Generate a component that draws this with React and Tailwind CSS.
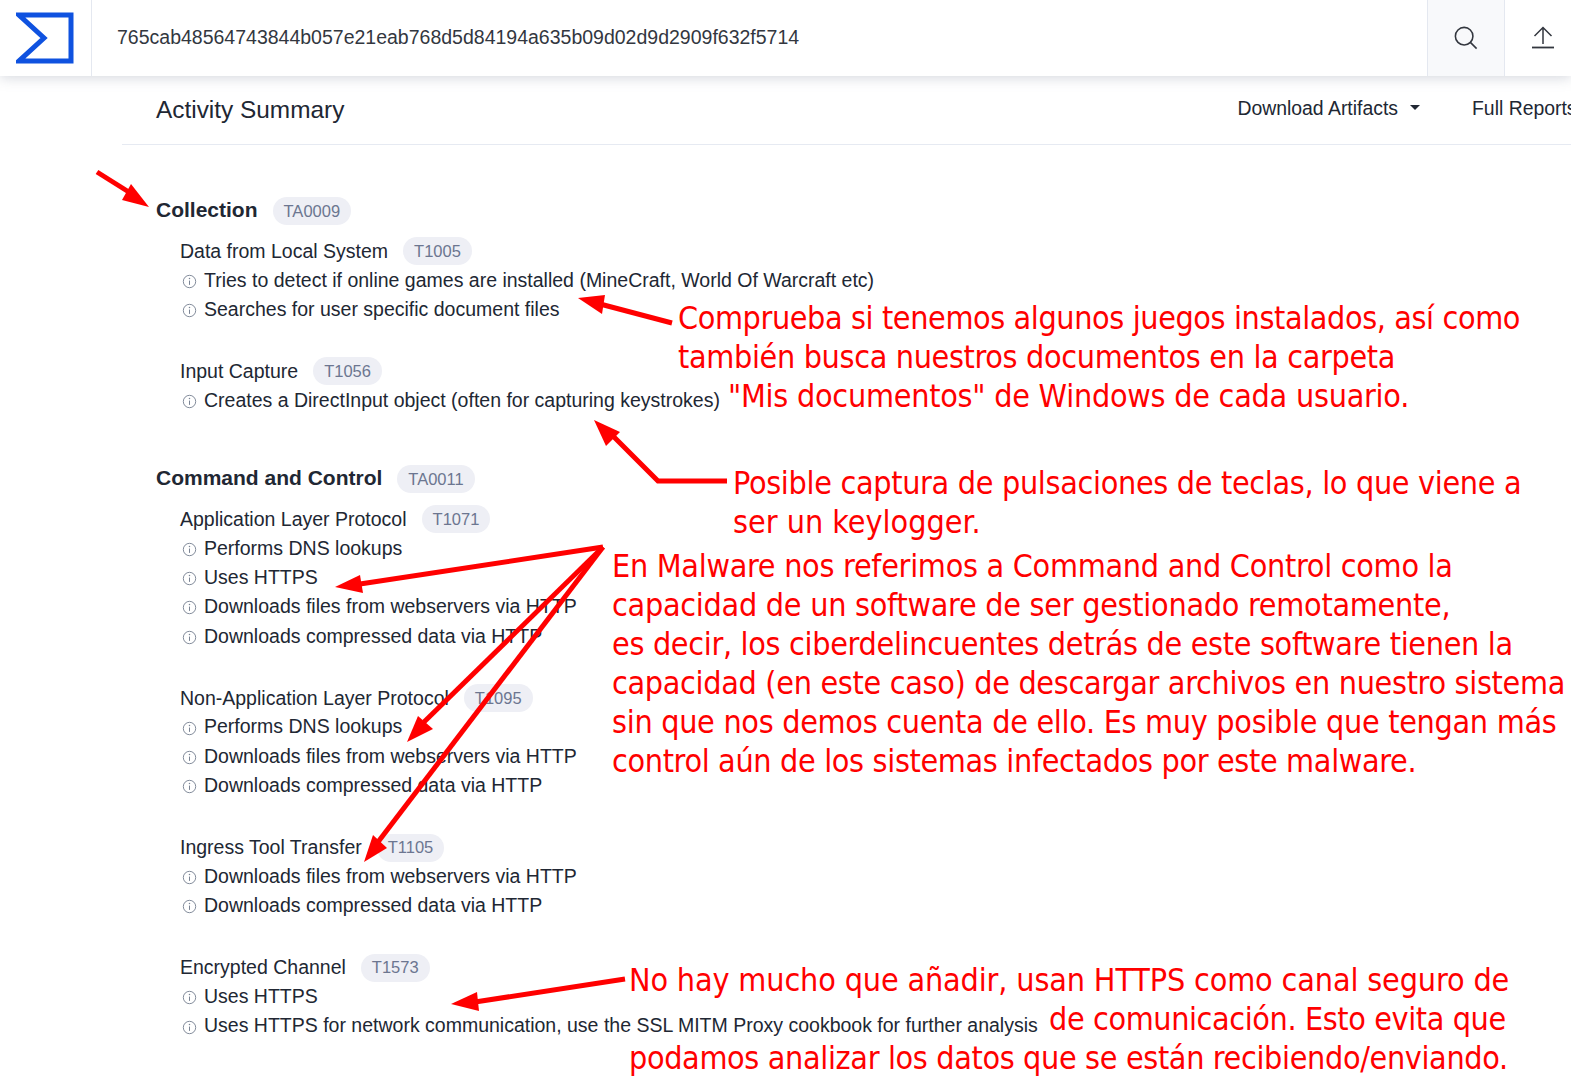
import React from "react";

const sans = "font-['Liberation_Sans',Arial,sans-serif]";

function Info() {
  return (
    <svg width="15" height="15" viewBox="0 0 16 16" fill="none" className="shrink-0 mt-[2px]">
      <circle cx="8" cy="8" r="6.6" stroke="#7b8494" strokeWidth="1" />
      <path d="M8 7v4.6" stroke="#7b8494" strokeWidth="1.1" />
      <circle cx="8" cy="4.8" r="0.8" fill="#7b8494" />
    </svg>
  );
}

function Badge({ children, className = "" }) {
  return (
    <span className={`ml-[15px] inline-flex h-[28px] items-center rounded-full bg-[#eeeff5] px-[11px] text-[16.5px] font-normal text-[#6c7690] ${className}`}>
      {children}
    </span>
  );
}

function Technique({ name, id, items, className = "" }) {
  return (
    <div className={`ml-6 ${className}`}>
      <div className="flex h-[28.6px] items-center text-[19.5px] text-[#212733]">
        <span>{name}</span>
        <Badge>{id}</Badge>
      </div>
      {items.map((t, i) => (
        <div key={i} className="flex h-[29.3px] items-center gap-[7px] pl-[1px] text-[19.5px] text-[#212733]">
          <span className="flex w-[16px] justify-center"><Info /></span>
          <span className="whitespace-nowrap">{t}</span>
        </div>
      ))}
    </div>
  );
}

function Tactic({ name, id, className = "", children }) {
  return (
    <div className={className}>
      <div className="flex h-[28px] items-center text-[21px] font-bold text-[#212733]">
        <span>{name}</span>
        <Badge className="mt-[2px]">{id}</Badge>
      </div>
      {children}
    </div>
  );
}

const dl = "Downloads files from webservers via HTTP";
const dc = "Downloads compressed data via HTTP";

const notes = [
  { x: 678, y: 299, c: "tracking-[-0.39px]", t: "Comprueba si tenemos algunos juegos instalados, así como" },
  { x: 678, y: 338, c: "tracking-[-0.34px]", t: "también busca nuestros documentos en la carpeta" },
  { x: 728, y: 377, c: "tracking-[-0.25px]", t: "\"Mis documentos\" de Windows de cada usuario." },
  { x: 733, y: 464, c: "tracking-[-0.32px]", t: "Posible captura de pulsaciones de teclas, lo que viene a" },
  { x: 733, y: 503, c: "tracking-[0px]", t: "ser un keylogger." },
  { x: 612, y: 547, c: "tracking-[-0.28px]", t: "En Malware nos referimos a Command and Control como la" },
  { x: 612, y: 586, c: "tracking-[-0.27px]", t: "capacidad de un software de ser gestionado remotamente," },
  { x: 612, y: 625, c: "tracking-[-0.32px]", t: "es decir, los ciberdelincuentes detrás de este software tienen la" },
  { x: 612, y: 664, c: "tracking-[-0.32px]", t: "capacidad (en este caso) de descargar archivos en nuestro sistema" },
  { x: 612, y: 703, c: "tracking-[-0.3px]", t: "sin que nos demos cuenta de ello. Es muy posible que tengan más" },
  { x: 612, y: 742, c: "tracking-[-0.34px]", t: "control aún de los sistemas infectados por este malware." },
  { x: 629, y: 961, c: "tracking-[-0.14px]", t: "No hay mucho que añadir, usan HTTPS como canal seguro de" },
  { x: 1049, y: 1000, c: "tracking-[-0.39px]", t: "de comunicación. Esto evita que" },
  { x: 629, y: 1039, c: "tracking-[-0.35px]", t: "podamos analizar los datos que se están recibiendo/enviando." },
];

function Arrow({ pts, tip }) {
  return (
    <g>
      <polyline points={pts} fill="none" stroke="#ff0000" strokeWidth="5" strokeLinejoin="miter" />
      <polygon points={tip} fill="#ff0000" />
    </g>
  );
}

export default function App() {
  return (
    <div className={`relative h-[1080px] w-[1571px] overflow-hidden bg-white ${sans}`}>
      <header className="relative z-10 flex h-[76px] items-stretch bg-white shadow-[0_2px_12px_rgba(120,130,150,0.3)]">
        <div className="flex w-[92px] items-center justify-center border-r border-[#e4e8f0]">
          <svg width="58" height="52" viewBox="0 0 58 52" className="mr-[2px]">
            <path d="M3 3 H55 V49 H3 L28 26 Z" fill="none" stroke="#0f52e0" strokeWidth="5" />
          </svg>
        </div>
        <div className="flex flex-1 items-center pl-[25px] text-[19.5px] text-[#33373f]">
          765cab48564743844b057e21eab768d5d84194a635b09d02d9d2909f632f5714
        </div>
        <div className="flex w-[78px] items-center justify-center border-x border-[#e4e8f0] bg-[#f8f9fb]">
          <svg width="24" height="24" viewBox="0 0 26 26" fill="none" stroke="#33373f" strokeWidth="1.7">
            <circle cx="11" cy="11" r="9.5" />
            <path d="M17.5 17.5 L24.5 24.5" />
          </svg>
        </div>
        <div className="flex w-[66px] items-center justify-center pl-[9px]">
          <svg width="24" height="24" viewBox="0 0 24 24" fill="none" stroke="#33373f" strokeWidth="1.5">
            <path d="M12 18 V2 M3.5 10 L12 1.5 L20.5 10" />
            <path d="M1 21.5 H23" strokeWidth="1.8" />
          </svg>
        </div>
      </header>

      <main className="ml-[122px]">
        <div className="flex h-[69px] items-center border-b border-[#e6eaf2] pl-[34px] text-[#212733]">
          <h1 className="text-[24.4px] font-normal">Activity Summary</h1>
          <div className="ml-auto flex items-center whitespace-nowrap pb-[2px] text-[19.4px]">
            <span>Download Artifacts</span>
            <span className="ml-[12px] mb-[2px] h-0 w-0 border-x-[5.5px] border-t-[5.5px] border-x-transparent border-t-[#212733]" />
            <span className="ml-[52px] w-[99px]">Full Reports</span>
          </div>
        </div>

        <div className="pl-[34px] pt-[51px]">
          <Tactic name="Collection" id="TA0009">
            <Technique className="mt-[13px]" name="Data from Local System" id="T1005" items={["Tries to detect if online games are installed (MineCraft, World Of Warcraft etc)", "Searches for user specific document files"]} />
            <Technique className="mt-[33px]" name="Input Capture" id="T1056" items={["Creates a DirectInput object (often for capturing keystrokes)"]} />
          </Tactic>
          <Tactic className="mt-[49px]" name="Command and Control" id="TA0011">
            <Technique className="mt-[13px]" name="Application Layer Protocol" id="T1071" items={["Performs DNS lookups", "Uses HTTPS", dl, dc]} />
            <Technique className="mt-[33px]" name="Non-Application Layer Protocol" id="T1095" items={["Performs DNS lookups", dl, dc]} />
            <Technique className="mt-[33px]" name="Ingress Tool Transfer" id="T1105" items={[dl, dc]} />
            <Technique className="mt-[33px]" name="Encrypted Channel" id="T1573" items={["Uses HTTPS", "Uses HTTPS for network communication, use the SSL MITM Proxy cookbook for further analysis"]} />
          </Tactic>
        </div>
      </main>

      <svg className="absolute left-0 top-0 z-20" width="1571" height="1080" viewBox="0 0 1571 1080">
        <Arrow pts="97,172 132,194" tip="149,207 122,200 131,184" />
        <Arrow pts="672,323 600,304" tip="578,298 605,295 602,314" />
        <Arrow pts="727,481 658,481 610,433" tip="594,420 620,432 606,446" />
        <Arrow pts="603,547 360,584" tip="335,587 360,575 363,593" />
        <Arrow pts="603,547 424,722" tip="407,742 418,716 433,729" />
        <Arrow pts="603,547 378,842" tip="364,862 373,835 387,848" />
        <Arrow pts="625,979 475,1002" tip="451,1004 477,992 479,1011" />
      </svg>

      {notes.map((n) => (
        <div
          key={n.t}
          style={{ left: n.x, top: n.y }}
          className={`absolute z-30 whitespace-nowrap font-['DejaVu_Sans_Condensed','DejaVu_Sans',sans-serif] text-[32px] leading-[39px] text-[#ff0000] ${n.c}`}
        >
          {n.t}
        </div>
      ))}
    </div>
  );
}
